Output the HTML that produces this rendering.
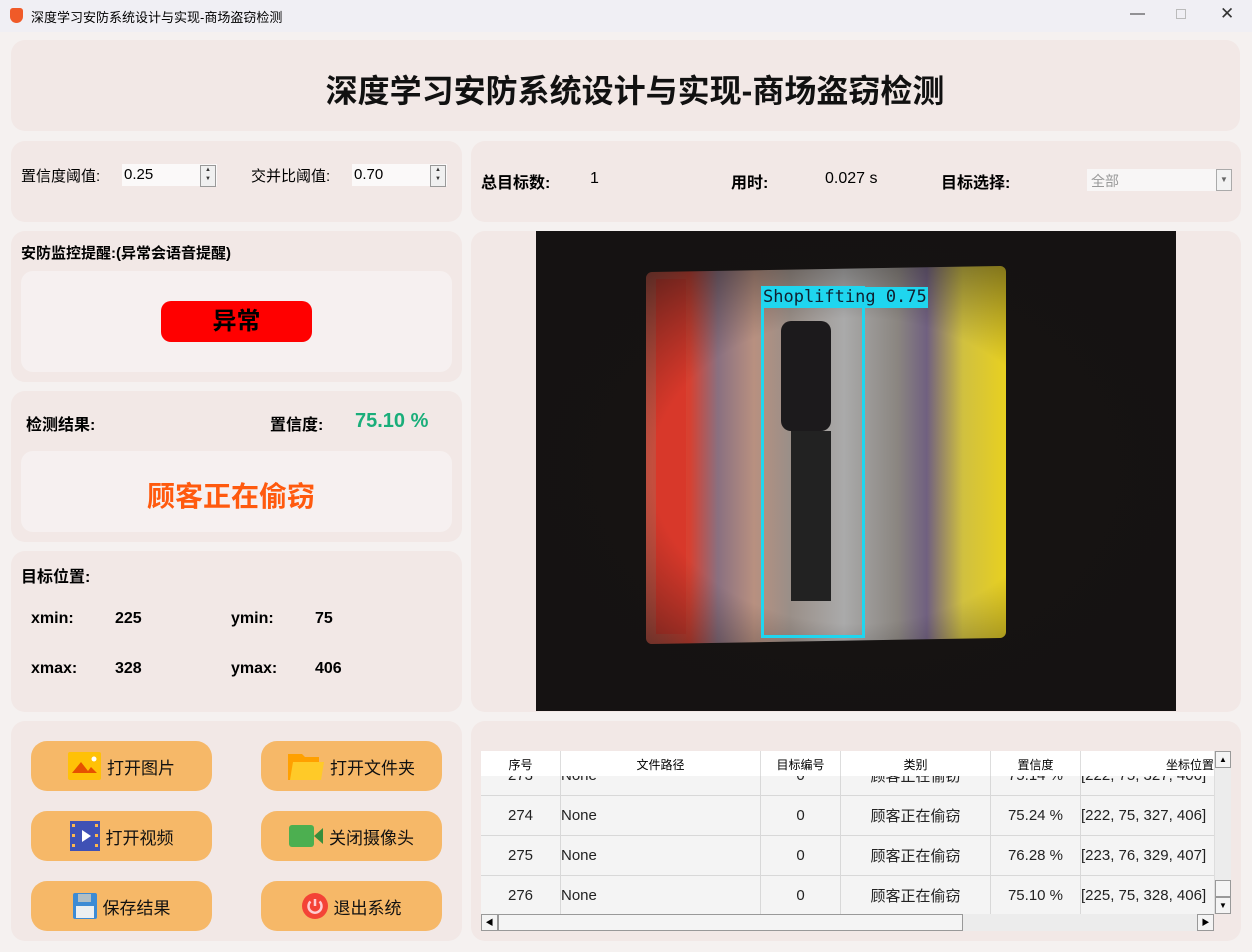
<!DOCTYPE html><html><head><meta charset="utf-8"><style>
*{margin:0;padding:0;box-sizing:border-box}
body{width:1252px;height:952px;background:#f5f1f0;font-family:"Liberation Sans","Noto Sans CJK SC",sans-serif;position:relative;overflow:hidden}
.a{position:absolute}
.p{position:absolute;background:#f2e8e6;border-radius:14px}
.b{font-weight:bold}
.btn{position:absolute;width:181px;height:50px;background:#f6b868;border-radius:16px;font-size:17px;display:flex;align-items:center;justify-content:center;gap:6px;color:#111}
.spin{position:absolute;background:#fbf9f9;height:22px;font-size:15px;padding:2px 2px}
.sb{position:absolute;width:16px;height:22px;border:1px solid #999;background:#f0f0f0;font-size:6px;line-height:9px;text-align:center;color:#333}
table{border-collapse:collapse;font-size:15px;table-layout:fixed}
td{border:1px solid #d8d8d8;height:40px;text-align:center;background:#f4f4f4;color:#222}
</style></head><body>
<div class="a" style="left:0;top:0;width:1252px;height:32px;background:#f0eff4"></div>
<div class="a" style="left:10px;top:8px;width:13px;height:15px;background:#f05a28;border-radius:3px 3px 7px 7px"></div>
<div class="a" style="left:31px;top:7px;font-size:13px">深度学习安防系统设计与实现-商场盗窃检测</div>
<div class="a" style="left:1130px;top:5px;font-size:15px;color:#333">—</div>
<div class="a" style="left:1176px;top:9px;width:10px;height:10px;border:1px solid #bbb"></div>
<div class="a" style="left:1220px;top:4px;font-size:17px;color:#333">✕</div>

<div class="p" style="left:11px;top:40px;width:1229px;height:91px"></div>
<div class="a b" style="left:0;width:1270px;top:66px;text-align:center;font-size:32px;color:#111">深度学习安防系统设计与实现-商场盗窃检测</div>

<div class="p" style="left:11px;top:141px;width:451px;height:81px"></div>
<div class="a" style="left:21px;top:165px;font-size:15px">置信度阈值:</div>
<div class="spin" style="left:122px;top:164px;width:95px">0.25</div>
<div class="sb" style="left:200px;top:165px">▲<br>▼</div>
<div class="a" style="left:251px;top:165px;font-size:15px">交并比阈值:</div>
<div class="spin" style="left:352px;top:164px;width:95px">0.70</div>
<div class="sb" style="left:430px;top:165px">▲<br>▼</div>

<div class="p" style="left:471px;top:141px;width:770px;height:81px"></div>
<div class="a b" style="left:481px;top:169px;font-size:16px">总目标数:</div>
<div class="a" style="left:590px;top:170px;font-size:16px">1</div>
<div class="a b" style="left:731px;top:169px;font-size:16px">用时:</div>
<div class="a" style="left:825px;top:170px;font-size:16px">0.027 s</div>
<div class="a b" style="left:941px;top:169px;font-size:16px">目标选择:</div>
<div class="a" style="left:1087px;top:169px;width:145px;height:22px;background:#f8f6f6;color:#999;font-size:14px;padding:2px 4px">全部</div>
<div class="a" style="left:1216px;top:169px;width:16px;height:22px;border:1px solid #aaa;background:#f2f2f2;font-size:8px;text-align:center;line-height:20px;color:#666">▼</div>

<div class="p" style="left:11px;top:231px;width:451px;height:151px"></div>
<div class="a b" style="left:21px;top:242px;font-size:15px">安防监控提醒:(异常会语音提醒)</div>
<div class="a" style="left:21px;top:271px;width:431px;height:101px;background:#f6f0f0;border-radius:12px"></div>
<div class="a b" style="left:161px;top:301px;width:151px;height:41px;background:#ff0000;border-radius:10px;font-size:24px;text-align:center;line-height:41px">异常</div>

<div class="p" style="left:11px;top:391px;width:451px;height:151px"></div>
<div class="a b" style="left:26px;top:411px;font-size:16px">检测结果:</div>
<div class="a b" style="left:270px;top:411px;font-size:16px">置信度:</div>
<div class="a b" style="left:355px;top:410px;font-size:20px;color:#1aae7a">75.10 %</div>
<div class="a" style="left:21px;top:451px;width:431px;height:81px;background:#f6f0f0;border-radius:12px"></div>
<div class="a b" style="left:21px;top:475px;width:420px;text-align:center;font-size:28px;color:#ff5a0e">顾客正在偷窃</div>

<div class="p" style="left:11px;top:551px;width:451px;height:161px"></div>
<div class="a b" style="left:21px;top:563px;font-size:16px">目标位置:</div>
<div class="a b" style="left:31px;top:610px;font-size:16px">xmin:</div><div class="a b" style="left:115px;top:610px;font-size:16px">225</div>
<div class="a b" style="left:231px;top:610px;font-size:16px">ymin:</div><div class="a b" style="left:315px;top:610px;font-size:16px">75</div>
<div class="a b" style="left:31px;top:660px;font-size:16px">xmax:</div><div class="a b" style="left:115px;top:660px;font-size:16px">328</div>
<div class="a b" style="left:231px;top:660px;font-size:16px">ymax:</div><div class="a b" style="left:315px;top:660px;font-size:16px">406</div>

<div class="p" style="left:471px;top:231px;width:770px;height:481px"></div>
<div class="a" style="left:536px;top:231px;width:640px;height:480px;background:#161312;overflow:hidden">
 <div class="a" style="left:110px;top:38px;width:360px;height:372px;background:linear-gradient(90deg,#c05040 0%,#d84030 12%,#8a7080 20%,#b89080 30%,#9a8f88 40%,#aaa 55%,#8a8580 70%,#706080 78%,#d0c040 88%,#e8d020 100%);border-radius:6px;transform:skewY(-1deg)"></div>
 <div class="a" style="left:120px;top:48px;width:30px;height:355px;background:#d8382a"></div>
 <div class="a" style="left:245px;top:90px;width:50px;height:110px;background:#1c1a1c;border-radius:10px"></div>
 <div class="a" style="left:255px;top:200px;width:40px;height:170px;background:#222"></div>
 <div class="a" style="left:0;top:0;width:640px;height:480px;background:radial-gradient(ellipse at 50% 50%,rgba(0,0,0,0) 45%,rgba(20,18,18,0.6) 75%)"></div>
 <div class="a" style="left:225px;top:55px;width:104px;height:352px;border:3px solid #1fd6ef"></div>
 <div class="a" style="left:225px;top:56px;width:167px;height:21px;background:#1fd6ef;font-family:'DejaVu Sans Mono',monospace;font-size:17px;line-height:21px;color:#102030;padding-left:2px">Shoplifting 0.75</div>
</div>

<div class="p" style="left:471px;top:721px;width:770px;height:220px"></div>
<div class="a" style="left:481px;top:751px;width:733px;height:163px;overflow:hidden;background:#f4f4f4">
<table style="width:790px;margin-top:4px;margin-left:-1px">
<colgroup><col style="width:80px"><col style="width:200px"><col style="width:80px"><col style="width:150px"><col style="width:90px"><col style="width:190px"></colgroup>
<tr><td>273</td><td style="text-align:left">None</td><td>0</td><td>顾客正在偷窃</td><td>75.14 %</td><td style="text-align:left">[222, 75, 327, 406]</td></tr>
<tr><td>274</td><td style="text-align:left">None</td><td>0</td><td>顾客正在偷窃</td><td>75.24 %</td><td style="text-align:left">[222, 75, 327, 406]</td></tr>
<tr><td>275</td><td style="text-align:left">None</td><td>0</td><td>顾客正在偷窃</td><td>76.28 %</td><td style="text-align:left">[223, 76, 329, 407]</td></tr>
<tr><td>276</td><td style="text-align:left">None</td><td>0</td><td>顾客正在偷窃</td><td>75.10 %</td><td style="text-align:left">[225, 75, 328, 406]</td></tr>
</table>
<div class="a" style="left:0;top:0;width:733px;height:25px;background:#fff;font-size:12px;display:flex">
<div style="width:80px;text-align:center;padding-top:5px;border-right:1px solid #ddd">序号</div><div style="width:200px;text-align:center;padding-top:5px;border-right:1px solid #ddd">文件路径</div><div style="width:80px;text-align:center;padding-top:5px;border-right:1px solid #ddd">目标编号</div><div style="width:150px;text-align:center;padding-top:5px;border-right:1px solid #ddd">类别</div><div style="width:90px;text-align:center;padding-top:5px;border-right:1px solid #ddd">置信度</div><div style="width:133px;text-align:right;padding-top:5px">坐标位置</div></div>
</div>
<div class="a" style="left:1214px;top:751px;width:17px;height:163px;background:#ececec;border-left:1px solid #ddd"></div>
<div class="a" style="left:1215px;top:751px;width:16px;height:17px;background:#f4f4f4;border:1px solid #999;font-size:8px;text-align:center;line-height:15px">▲</div>
<div class="a" style="left:1215px;top:880px;width:16px;height:17px;background:#f4f4f4;border:1px solid #999"></div>
<div class="a" style="left:1215px;top:897px;width:16px;height:17px;background:#f4f4f4;border:1px solid #999;font-size:8px;text-align:center;line-height:15px">▼</div>
<div class="a" style="left:481px;top:914px;width:733px;height:17px;background:#ececec"></div>
<div class="a" style="left:481px;top:914px;width:17px;height:17px;background:#f4f4f4;border:1px solid #999;font-size:8px;text-align:center;line-height:15px">◀</div>
<div class="a" style="left:498px;top:914px;width:465px;height:17px;background:#f4f4f4;border:1px solid #999"></div>
<div class="a" style="left:1197px;top:914px;width:17px;height:17px;background:#f4f4f4;border:1px solid #999;font-size:8px;text-align:center;line-height:15px">▶</div>

<div class="p" style="left:11px;top:721px;width:451px;height:220px"></div>
<div class="btn" style="left:31px;top:741px"><svg width="33" height="28"><rect width="33" height="28" rx="2" fill="#ffc107"/><path d="M4 21 L13 10 L20 19 L23 15 L29 21Z" fill="#e65100"/><circle cx="26" cy="7" r="2.5" fill="#fff"/></svg>打开图片</div>
<div class="btn" style="left:261px;top:741px"><svg width="36" height="28"><path d="M0 2h14l3 3h14v23H0z" fill="#ffa000"/><path d="M5 10h31l-3 18H2z" fill="#ffca28"/></svg>打开文件夹</div>
<div class="btn" style="left:31px;top:811px"><svg width="30" height="30"><rect width="30" height="30" fill="#3f51b5"/><path d="M12 9 L21 15 L12 21Z" fill="#fff"/><g fill="#ffb74d"><rect x="2" y="3" width="3" height="3"/><rect x="2" y="13" width="3" height="3"/><rect x="2" y="23" width="3" height="3"/><rect x="25" y="3" width="3" height="3"/><rect x="25" y="13" width="3" height="3"/><rect x="25" y="23" width="3" height="3"/></g></svg>打开视频</div>
<div class="btn" style="left:261px;top:811px"><svg width="34" height="22"><rect width="25" height="22" rx="3" fill="#4caf50"/><path d="M25 11 L34 3 V19Z" fill="#388e3c"/></svg>关闭摄像头</div>
<div class="btn" style="left:31px;top:881px"><svg width="24" height="26"><rect width="24" height="26" rx="2" fill="#3d8bd4"/><rect x="5" y="1" width="13" height="8" fill="#b0bec5"/><rect x="3" y="13" width="18" height="12" fill="#eceff1"/></svg>保存结果</div>
<div class="btn" style="left:261px;top:881px"><svg width="26" height="26"><circle cx="13" cy="13" r="13" fill="#f44336"/><path d="M8.5 8.5 A6.5 6.5 0 1 0 17.5 8.5 M13 6 V13" stroke="#ffcdd2" stroke-width="2.5" fill="none"/></svg>退出系统</div>
</body></html>
